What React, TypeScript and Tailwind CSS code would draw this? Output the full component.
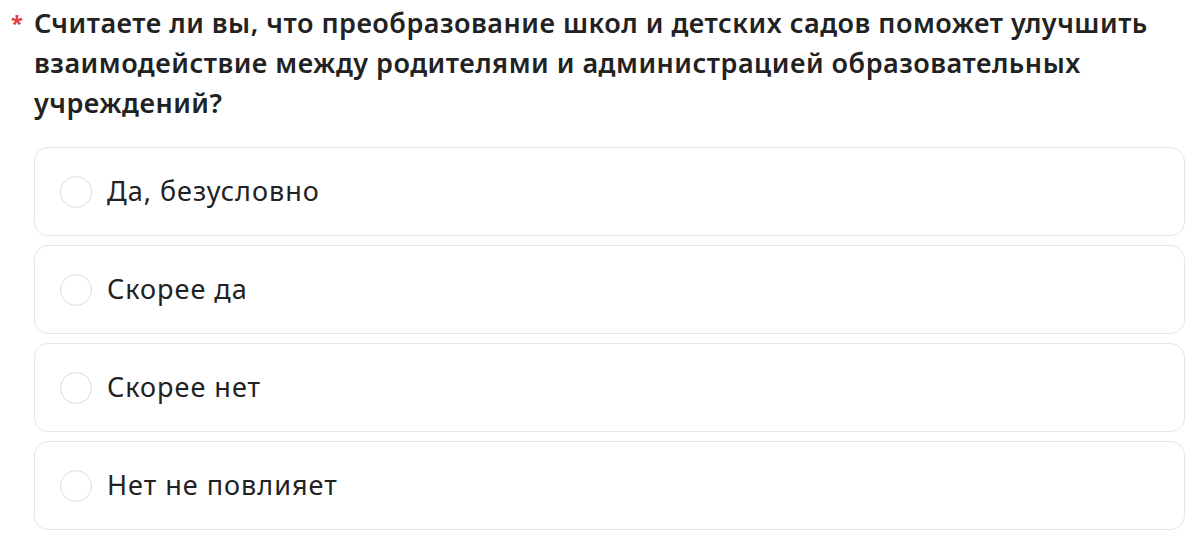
import { useState } from "react";

const options = ["Да, безусловно", "Скорее да", "Скорее нет", "Нет не повлияет"];

export default function App() {
  const [value, setValue] = useState<string | null>(null);

  return (
    <div className="w-[1200px] h-[540px] bg-white overflow-hidden font-['Noto_Sans',sans-serif] text-[#222]">
      <div className="relative pl-[34px] pr-[15px] pt-[3px]">
        <span className="absolute left-[11px] top-[6px] text-[22px] font-bold text-[#e0403a]">*</span>
        <h2 className="text-[27px] leading-[40px] font-semibold tracking-[0.5px] pr-[30px]">
          Считаете ли вы, что преобразование школ и детских садов поможет улучшить взаимодействие между родителями и администрацией образовательных учреждений?
        </h2>
        <div className="mt-[24px] flex flex-col gap-[9px]">
          {options.map((opt) => (
            <label
              key={opt}
              className="flex items-center h-[89px] px-[25px] rounded-[14px] border-[1.5px] border-[#e6e6e6] cursor-pointer"
            >
              <input
                type="radio"
                name="q"
                className="sr-only"
                checked={value === opt}
                onChange={() => setValue(opt)}
              />
              <span className="w-[32px] h-[32px] rounded-full border-[1.5px] border-[#dcdcdc] flex items-center justify-center shrink-0">
                {value === opt && <span className="w-[12px] h-[12px] rounded-full bg-[#222]" />}
              </span>
              <span className="ml-[15px] text-[27px] tracking-[1px] text-[#222]">{opt}</span>
            </label>
          ))}
        </div>
      </div>
    </div>
  );
}
